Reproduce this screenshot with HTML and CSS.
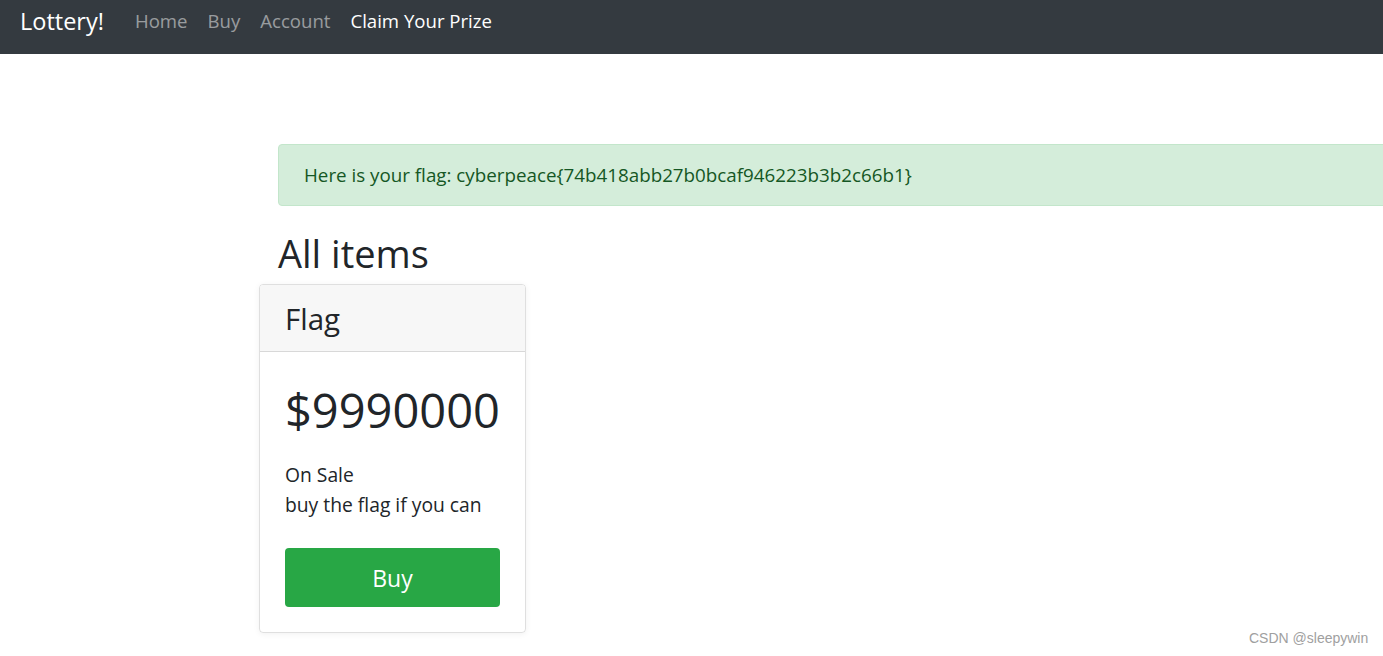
FILE: index.html
```html
<!DOCTYPE html>
<html lang="en">
<head>
<meta charset="utf-8">
<title>Lottery!</title>
<link rel="stylesheet" href="styles.css">
</head>
<body>
<nav class="navbar">
  <a class="brand" href="#">Lottery!</a>
  <ul class="nav">
    <li><a class="nav-link" href="#">Home</a></li>
    <li><a class="nav-link" href="#">Buy</a></li>
    <li><a class="nav-link" href="#">Account</a></li>
    <li><a class="nav-link active" href="#">Claim Your Prize</a></li>
  </ul>
</nav>
<main class="main">
  <div class="alert">Here is your flag: cyberpeace{74b418abb27b0bcaf946223b3b2c66b1}</div>
  <h2 class="title">All items</h2>
  <div class="card">
    <div class="card-header">Flag</div>
    <div class="card-body">
      <div class="price">$9990000</div>
      <p class="desc">On Sale<br>buy the flag if you can</p>
      <button class="btn">Buy</button>
    </div>
  </div>
</main>
<div class="watermark">CSDN @sleepywin</div>
</body>
</html>
```
FILE: styles.css
```css
* { box-sizing: border-box; }
html, body { margin: 0; padding: 0; }
body {
  font-family: "Open Sans", "Noto Sans", sans-serif;
  color: #212529;
  background: #fff;
  width: 1383px;
  height: 656px;
  overflow: hidden;
  position: relative;
}
.navbar {
  background: #343a40;
  height: 54px;
  display: flex;
  align-items: flex-start;
  padding: 4px 0 0 20px;
}
.brand {
  color: #fff;
  text-decoration: none;
  font-size: 23.5px;
  line-height: 34px;
  margin-right: 21px;
}
.nav {
  list-style: none;
  margin: 0;
  padding: 0;
  display: flex;
}
.nav-link {
  display: block;
  text-decoration: none;
  color: rgba(255,255,255,.5);
  font-size: 18.6px;
  line-height: 34px;
  padding: 0 10px;
}
.nav-link.active { color: #fff; }
.main {
  padding: 90px 0 0 278px;
}
.alert {
  width: 1140px;
  height: 62px;
  background: #d4edda;
  border: 1px solid #c3e6cb;
  color: #155724;
  border-radius: 4px;
  font-size: 18.8px;
  padding: 0 25px;
  display: flex;
  align-items: center;
}
.title {
  font-weight: 400;
  font-size: 38px;
  line-height: 48px;
  margin: 23px 0 7px 0;
}
.card {
  margin-left: -19px;
  width: 267px;
  border: 1px solid rgba(0,0,0,.125);
  border-radius: 4px;
  box-shadow: 0 1px 6px rgba(0,0,0,.06);
  overflow: hidden;
}
.card-header {
  background: #f7f7f7;
  border-bottom: 1px solid rgba(0,0,0,.125);
  height: 67px;
  display: flex;
  align-items: center;
  padding: 0 25px;
  font-size: 29.5px;
}
.card-body {
  padding: 22px 25px 25px;
}
.price {
  font-size: 47px;
  line-height: 72px;
}
.desc {
  margin: 14px 0 28px;
  font-size: 19.3px;
  line-height: 30px;
}
.btn {
  display: block;
  width: 100%;
  height: 59px;
  border: 0;
  border-radius: 4px;
  background: #28a745;
  color: #fff;
  font-family: inherit;
  font-size: 23px;
}
.watermark {
  position: absolute;
  left: 1249px;
  top: 630px;
  font-family: "Liberation Sans", Arial, sans-serif;
  font-size: 14px;
  color: #a0a0a0;
}
```
